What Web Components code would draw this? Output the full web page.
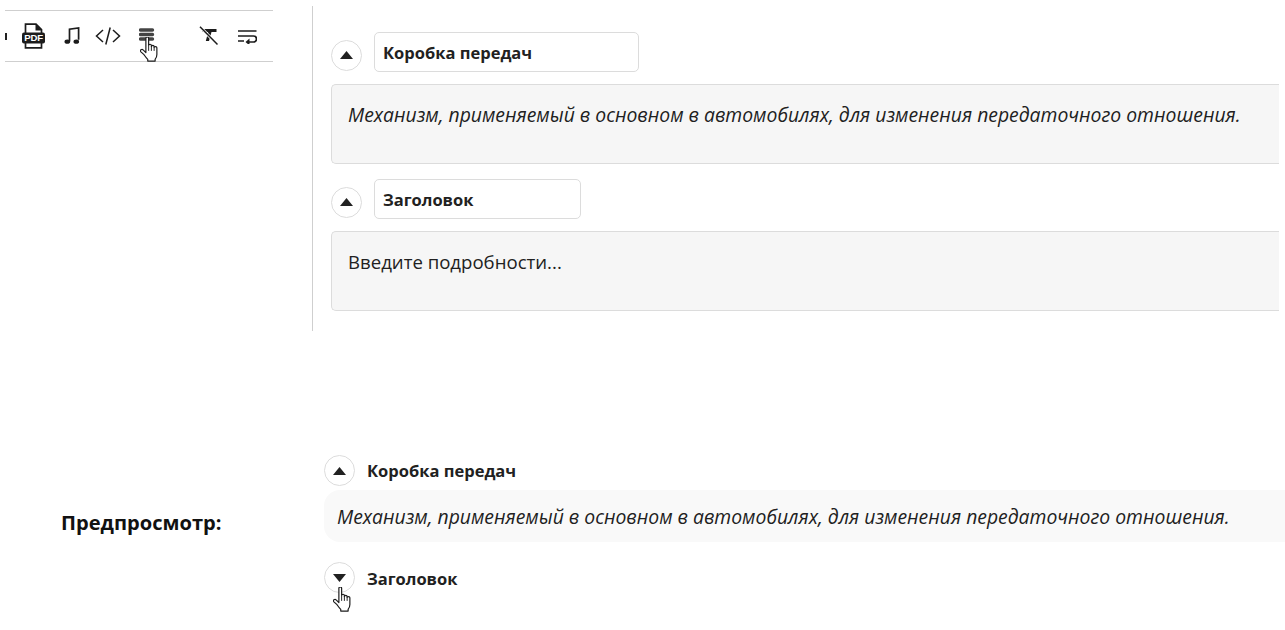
<!DOCTYPE html>
<html lang="ru">
<head>
<meta charset="utf-8">
<title>Аккордеон</title>
<style>
html, body { margin: 0; height: 630px; overflow: hidden; background: #fff; }
body { font-family: "Open Sans", "Noto Sans", sans-serif; color: #212121; }
</style>
</head>
<body>
<admin-page>
  <edit-toolbar slot="tools"></edit-toolbar>
  <edit-item slot="items" title-text="Коробка передач" title-width="265" italic>Механизм, применяемый в основном в автомобилях, для изменения передаточного отношения.</edit-item>
  <edit-item slot="items" title-text="Заголовок" title-width="207">Введите подробности...</edit-item>
  <preview-item slot="preview" title-text="Коробка передач" open>Механизм, применяемый в основном в автомобилях, для изменения передаточного отношения.</preview-item>
  <preview-item slot="preview" title-text="Заголовок" hand></preview-item>
</admin-page>

<script>
const HAND = `<svg width="18" height="25" viewBox="0.800 0.800 14.400 22" preserveAspectRatio="none"><path d="M5.500 1.800c0-1.300 2.200-1.300 2.200 0v6.300c0-1.200 2.200-1.200 2.200 0v1c0-1.200 2.200-1.200 2.200 0v1c0-1.100 2.200-1.100 2.200 .2v6c0 2-.6 3.200-1.400 4.200v1.500H7v-1.500c-1-1-1.800-2.300-3-4.200L1.300 13.600c-.8-1.300 1-2.500 2-1.400l2.200 2.300z" fill="#fff" stroke="#1c1c1c" stroke-width=".95" stroke-linejoin="round"/><path d="M7.700 8v5M9.900 9v4M12.100 10v3" stroke="#1c1c1c" stroke-width=".8" fill="none"/></svg>`;

class HandCursor extends HTMLElement {
  constructor() {
    super();
    this.attachShadow({mode: 'open'});
    this.shadowRoot.innerHTML = `<style>
      :host { position: absolute; display: block; width: 18px; height: 25px; line-height: 0; pointer-events: none; }
    </style>${HAND}`;
  }
}
customElements.define('hand-cursor', HandCursor);

class ToggleButton extends HTMLElement {
  constructor() {
    super();
    const down = this.hasAttribute('down');
    this.attachShadow({mode: 'open'});
    this.shadowRoot.innerHTML = `<style>
      :host { display: flex; flex: none; box-sizing: border-box; width: 31px; height: 31px; border: 1px solid #dcdcdc; border-radius: 50%; background: #fff; align-items: center; justify-content: center; }
      svg { display: block; }
    </style>
    <svg width="13" height="8" viewBox="0 0 13 8"><path d="${down ? 'M0 0h13L6.500 8z' : 'M6.500 0L13 8H0z'}" fill="#212121"/></svg>`;
  }
}
customElements.define('toggle-button', ToggleButton);

const toolbarTpl = document.createElement('template');
toolbarTpl.innerHTML = `
<style>
:host { display: flex; box-sizing: border-box; width: 268px; height: 52px; margin: 10px 0 0 5px; border-top: 1px solid #cfcfcf; border-bottom: 1px solid #cfcfcf; align-items: center; position: relative; }
.sep { width: 2px; height: 7px; background: #212121; margin: 0 7.500px 0 0; }
.btn { width: 38px; height: 30px; display: flex; align-items: center; justify-content: center; }
.gap { width: 23.500px; }
svg { display: block; }
text { font-family: "Liberation Sans", sans-serif; font-weight: 700; }
hand-cursor { left: 135px; top: 26px; }
</style>
<span class="sep"></span>
<span class="btn"><svg width="23" height="26" viewBox="0 0 23 26">
  <path d="M3.500 10V1.200h10.500l5.500 5.500V10M3.500 20v4.800h16V20" fill="none" stroke="#1c1c1c" stroke-width="1.700"/>
  <path d="M13.500 1v6.500H20z" fill="#1c1c1c"/>
  <rect x="0" y="9.500" width="23" height="11" rx="2" fill="#1c1c1c"/>
  <text x="11.500" y="18.300" font-size="9.600" fill="#fff" text-anchor="middle" letter-spacing="-.2">PDF</text>
</svg></span>
<span class="btn"><svg width="16" height="18" viewBox="0 0 16 18">
  <path d="M5.500 14.500V2.200L14.600 1v11.800" fill="none" stroke="#1c1c1c" stroke-width="1.700"/>
  <ellipse cx="3.300" cy="14.700" rx="2.800" ry="2.100" fill="#1c1c1c"/>
  <ellipse cx="12.300" cy="14.700" rx="2.800" ry="2.100" fill="#1c1c1c"/>
</svg></span>
<span class="btn"><svg width="26" height="20" viewBox="0 0 26 20" style="margin-left:-3px">
  <path d="M8 4L1.500 10 8 16M18 4l6.500 6L18 16M15.200 1.500L10.800 18.500" fill="none" stroke="#1c1c1c" stroke-width="1.500"/>
</svg></span>
<span class="btn"><svg width="16" height="18" viewBox="0 0 16 18" style="margin-left:-1px">
  <path d="M1.500 3h12M1.500 7.500h12M1.500 12h12" fill="none" stroke="#444" stroke-width="3.400" stroke-linecap="round"/>
</svg></span>
<span class="gap"></span>
<span class="btn"><svg width="20" height="20" viewBox="0 0 20 20">
  <path d="M3.500 3h14v3h-5l-2.500 9H6.800L9.200 6H3.500z" fill="#1c1c1c"/>
  <path d="M1 .8L18.500 18.500" stroke="#fff" stroke-width="3"/>
  <path d="M1 .8L18.500 18.500" stroke="#1c1c1c" stroke-width="1.500"/>
</svg></span>
<span class="btn"><svg width="19" height="15" viewBox="0 0 19 15">
  <path d="M0 2h18.500M0 7h15.500a2.800 2.800 0 0 1 0 6H9.500M0 12h6" fill="none" stroke="#1c1c1c" stroke-width="1.700"/>
  <path d="M11.500 9.500v7l-4-3.500z" fill="#1c1c1c"/>
</svg></span>
<hand-cursor></hand-cursor>`;

class EditToolbar extends HTMLElement {
  constructor() {
    super();
    this.attachShadow({mode: 'open'});
    this.shadowRoot.appendChild(toolbarTpl.content.cloneNode(true));
  }
}
customElements.define('edit-toolbar', EditToolbar);

const editTpl = document.createElement('template');
editTpl.innerHTML = `
<style>
:host { display: block; margin-bottom: 15px; }
.head { display: flex; align-items: center; gap: 12px; margin-bottom: 12px; height: 40px; }
toggle-button { position: relative; top: 3px; }
.title { box-sizing: border-box; height: 40px; border: 1px solid #dcdcdc; border-radius: 5px; padding: 0 8px; display: flex; align-items: center; font-size: 16.500px; font-weight: 700; color: #212121; background: #fff; }
.body { box-sizing: border-box; height: 80px; border: 1px solid #dcdcdc; border-right: 0; border-radius: 5px 0 0 5px; background: #f6f6f6; padding: 17px 16px; font-size: 18.600px; line-height: 26px; white-space: nowrap; overflow: hidden; }
:host([italic]) .body { font-style: italic; font-size: 19.350px; }
</style>
<div class="head"><toggle-button></toggle-button><div class="title"></div></div>
<div class="body"><slot></slot></div>`;

class EditItem extends HTMLElement {
  constructor() {
    super();
    this.attachShadow({mode: 'open'});
    this.shadowRoot.appendChild(editTpl.content.cloneNode(true));
    const title = this.shadowRoot.querySelector('.title');
    title.innerText = this.getAttribute('title-text');
    title.style.width = this.getAttribute('title-width') + 'px';
  }
}
customElements.define('edit-item', EditItem);

class PreviewItem extends HTMLElement {
  constructor() {
    super();
    const open = this.hasAttribute('open');
    this.attachShadow({mode: 'open'});
    this.shadowRoot.innerHTML = `<style>
      :host { display: block; position: relative; margin-bottom: 20px; }
      .head { display: flex; align-items: center; gap: 12px; height: 31px; font-size: 16.500px; font-weight: 700; color: #212121; }
      :host([hand]) .head span { padding-top: 2px; }
      .body { margin-top: 4px; height: 52px; box-sizing: border-box; border-radius: 16px 0 0 16px; background: #f9f9f9; padding: 0 13px; display: flex; align-items: center; font-size: 19.350px; font-style: italic; white-space: nowrap; }
      hand-cursor { left: 9px; top: 25px; }
    </style>
    <div class="head"><toggle-button ${open ? '' : 'down'}></toggle-button><span>${this.getAttribute('title-text')}</span></div>
    ${open ? '<div class="body"><slot></slot></div>' : ''}
    ${this.hasAttribute('hand') ? '<hand-cursor></hand-cursor>' : ''}`;
  }
}
customElements.define('preview-item', PreviewItem);

const pageTpl = document.createElement('template');
pageTpl.innerHTML = `
<style>
:host { display: block; width: 1285px; height: 630px; overflow: hidden; }
.top { display: flex; height: 331px; }
.left { width: 312px; flex: none; }
.right { box-sizing: border-box; width: 967px; margin-top: 6px; border-left: 1px solid #cfcfcf; padding: 26px 0 0 18px; overflow: hidden; }
.bottom { display: flex; margin-top: 124px; }
.label { width: 324px; flex: none; box-sizing: border-box; padding: 54px 0 0 61px; font-size: 20.100px; font-weight: 700; color: #111; }
.items { flex: 1; min-width: 0; overflow: hidden; }
</style>
<div class="top">
  <div class="left"><slot name="tools"></slot></div>
  <div class="right"><slot name="items"></slot></div>
</div>
<div class="bottom">
  <div class="label">Предпросмотр:</div>
  <div class="items"><slot name="preview"></slot></div>
</div>`;

class AdminPage extends HTMLElement {
  constructor() {
    super();
    this.attachShadow({mode: 'open'});
    this.shadowRoot.appendChild(pageTpl.content.cloneNode(true));
  }
}
customElements.define('admin-page', AdminPage);
</script>
</body>
</html>
